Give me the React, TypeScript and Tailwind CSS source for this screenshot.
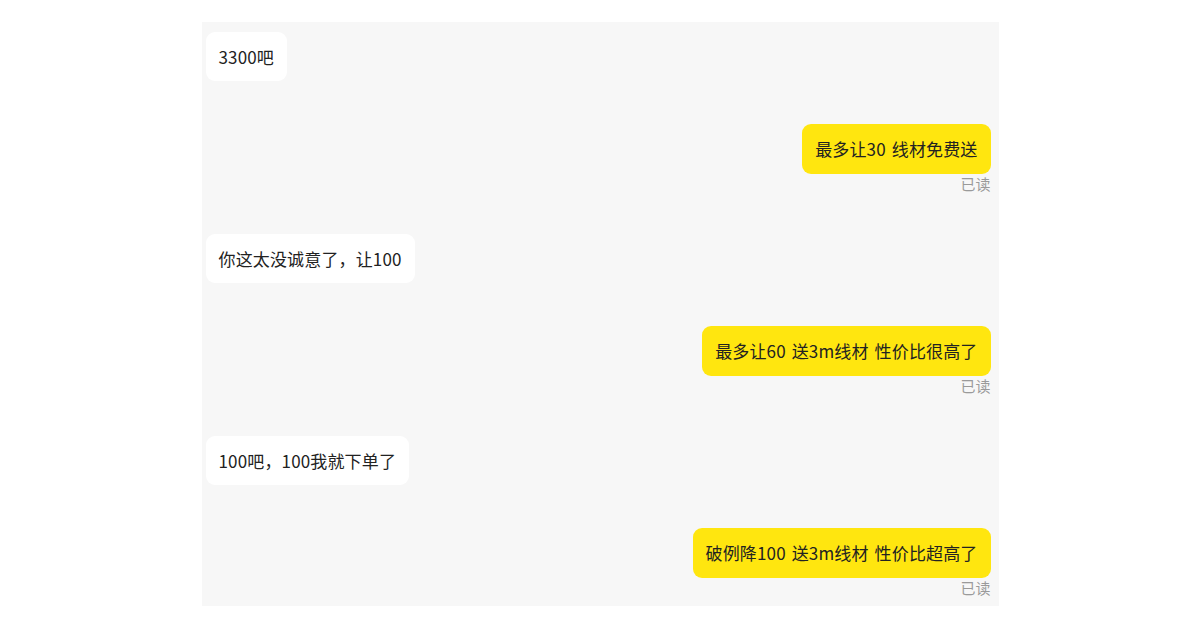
import React from "react";

type Msg = { side: "l" | "r"; text: string };

const msgs: Msg[] = [
  { side: "l", text: "3300吧" },
  { side: "r", text: "最多让30 线材免费送" },
  { side: "l", text: "你这太没诚意了，让100" },
  { side: "r", text: "最多让60 送3m线材 性价比很高了" },
  { side: "l", text: "100吧，100我就下单了" },
  { side: "r", text: "破例降100 送3m线材 性价比超高了" },
];

export default function App() {
  return (
    <div
      className="w-[1200px] h-[630px] bg-white pt-[22px]"
      style={{ fontFamily: '"Noto Sans CJK SC", "Noto Sans", sans-serif' }}
    >
      <div className="mx-auto w-[797px] h-[584px] bg-[#f7f7f7] pt-[10px] pl-[4px] pr-[8px] flex flex-col">
        {msgs.map((m, i) =>
          m.side === "l" ? (
            <div key={i} className="flex justify-start mb-[43px]">
              <div className="bg-white rounded-[9px] px-[13px] py-[12px] text-[17px] leading-[25px] tracking-[0.15px] [word-spacing:2px] text-[#222]">
                {m.text}
              </div>
            </div>
          ) : (
            <div key={i} className="flex flex-col items-end mb-[40px]">
              <div className="bg-[#ffe60f] rounded-[9px] px-[13px] py-[12px] text-[17px] leading-[26px] tracking-[0.15px] [word-spacing:2px] text-[#222]">
                {m.text}
              </div>
              <div className="text-[15px] leading-[20px] text-[#9a9a9a]">已读</div>
            </div>
          )
        )}
      </div>
    </div>
  );
}
